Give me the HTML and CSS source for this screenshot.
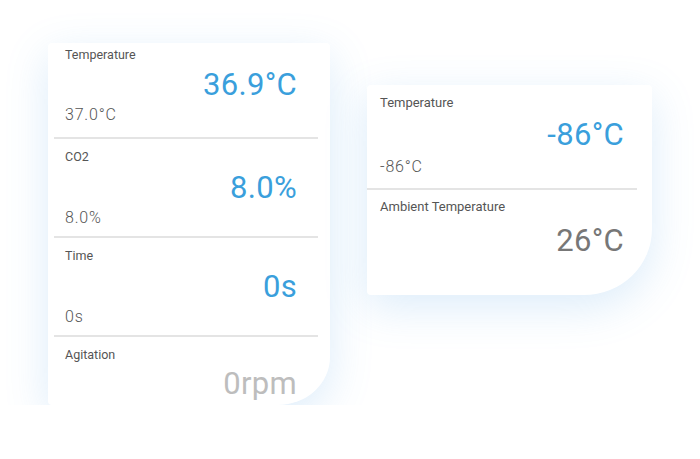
FILE: index.html
```html
<!DOCTYPE html>
<html lang="en">
  <head>
    <meta charset="utf-8">
    <title>Readings</title>
    <link rel="stylesheet" href="styles.css">
  </head>
  <body>

  <div class="board">

    <div class="card card-incubator">
      <div class="reading first">
        <div class="label">Temperature</div>
        <div class="value">36.9°C</div>
        <div class="setpoint">37.0°C</div>
      </div>
      <hr class="divider">
      <div class="reading">
        <div class="label">CO2</div>
        <div class="value">8.0%</div>
        <div class="setpoint">8.0%</div>
      </div>
      <hr class="divider">
      <div class="reading">
        <div class="label">Time</div>
        <div class="value">0s</div>
        <div class="setpoint">0s</div>
      </div>
      <hr class="divider">
      <div class="reading last">
        <div class="label">Agitation</div>
        <div class="value muted">0rpm</div>
      </div>
    </div>

    <div class="card card-freezer">
      <div class="reading first">
        <div class="label">Temperature</div>
        <div class="value">-86°C</div>
        <div class="setpoint">-86°C</div>
      </div>
      <hr class="divider">
      <div class="reading last">
        <div class="label">Ambient Temperature</div>
        <div class="value grey">26°C</div>
      </div>
    </div>

  </div>

  </body>
</html>
```

FILE: styles.css
```css
html {
  height: 100%;
}
body {
  margin: 0;
  padding: 0;
  background: #ffffff;
  font-family: Roboto, "Liberation Sans", sans-serif;
  color: #444;
}

.board {
  display: flex;
  align-items: flex-start;
  gap: 37px;
  padding: 43px 0 0 48px;
}

.card {
  background: #fff;
  border-radius: 4px;
  box-shadow: 0 12px 44px rgba(80, 160, 230, 0.2);
  overflow: hidden;
}

.card-incubator {
  width: 282px;
  height: 362px;
  border-bottom-right-radius: 52px 48px;
}

.card-freezer {
  width: 285px;
  height: 210px;
  margin-top: 42px;
  border-bottom-right-radius: 68px 66px;
}

.divider {
  border: 0;
  height: 2px;
  background: #e4e4e4;
  margin: 0 12px 0 6px;
}
.card-freezer .divider {
  margin: 0 15px 0 0;
}

.reading {
  display: flex;
  flex-direction: column;
  padding: 10px 33px 8px 17px;
}
.card-incubator .reading.first {
  padding-top: 4px;
  padding-bottom: 12px;
}
.card-incubator .reading.first .value {
  margin-top: 4px;
}

.card-freezer .reading {
  padding: 9px 28px 11px 13px;
}
.card-freezer .reading.first {
  padding-top: 10px;
}
.card-freezer .reading.first .value {
  margin-top: 6px;
}
.card-freezer .reading.first .setpoint {
  margin-top: 4px;
}
.card-freezer .reading.last .value {
  margin-top: 8px;
}
.card-freezer .label {
  font-size: 13px;
}

.label {
  font-size: 12.5px;
  line-height: 16px;
  color: #555;
}

.value {
  margin-top: 5px;
  align-self: flex-end;
  font-size: 31px;
  line-height: 36px;
  color: #3a9fdc;
  letter-spacing: 0.3px;
}
.value.muted {
  margin-top: 3px;
  color: #bdbdbd;
}
.value.grey {
  color: #777;
}

.setpoint {
  margin-top: 2px;
  font-size: 16px;
  line-height: 20px;
  font-weight: 300;
  color: #555;
  letter-spacing: 0.8px;
}
```
